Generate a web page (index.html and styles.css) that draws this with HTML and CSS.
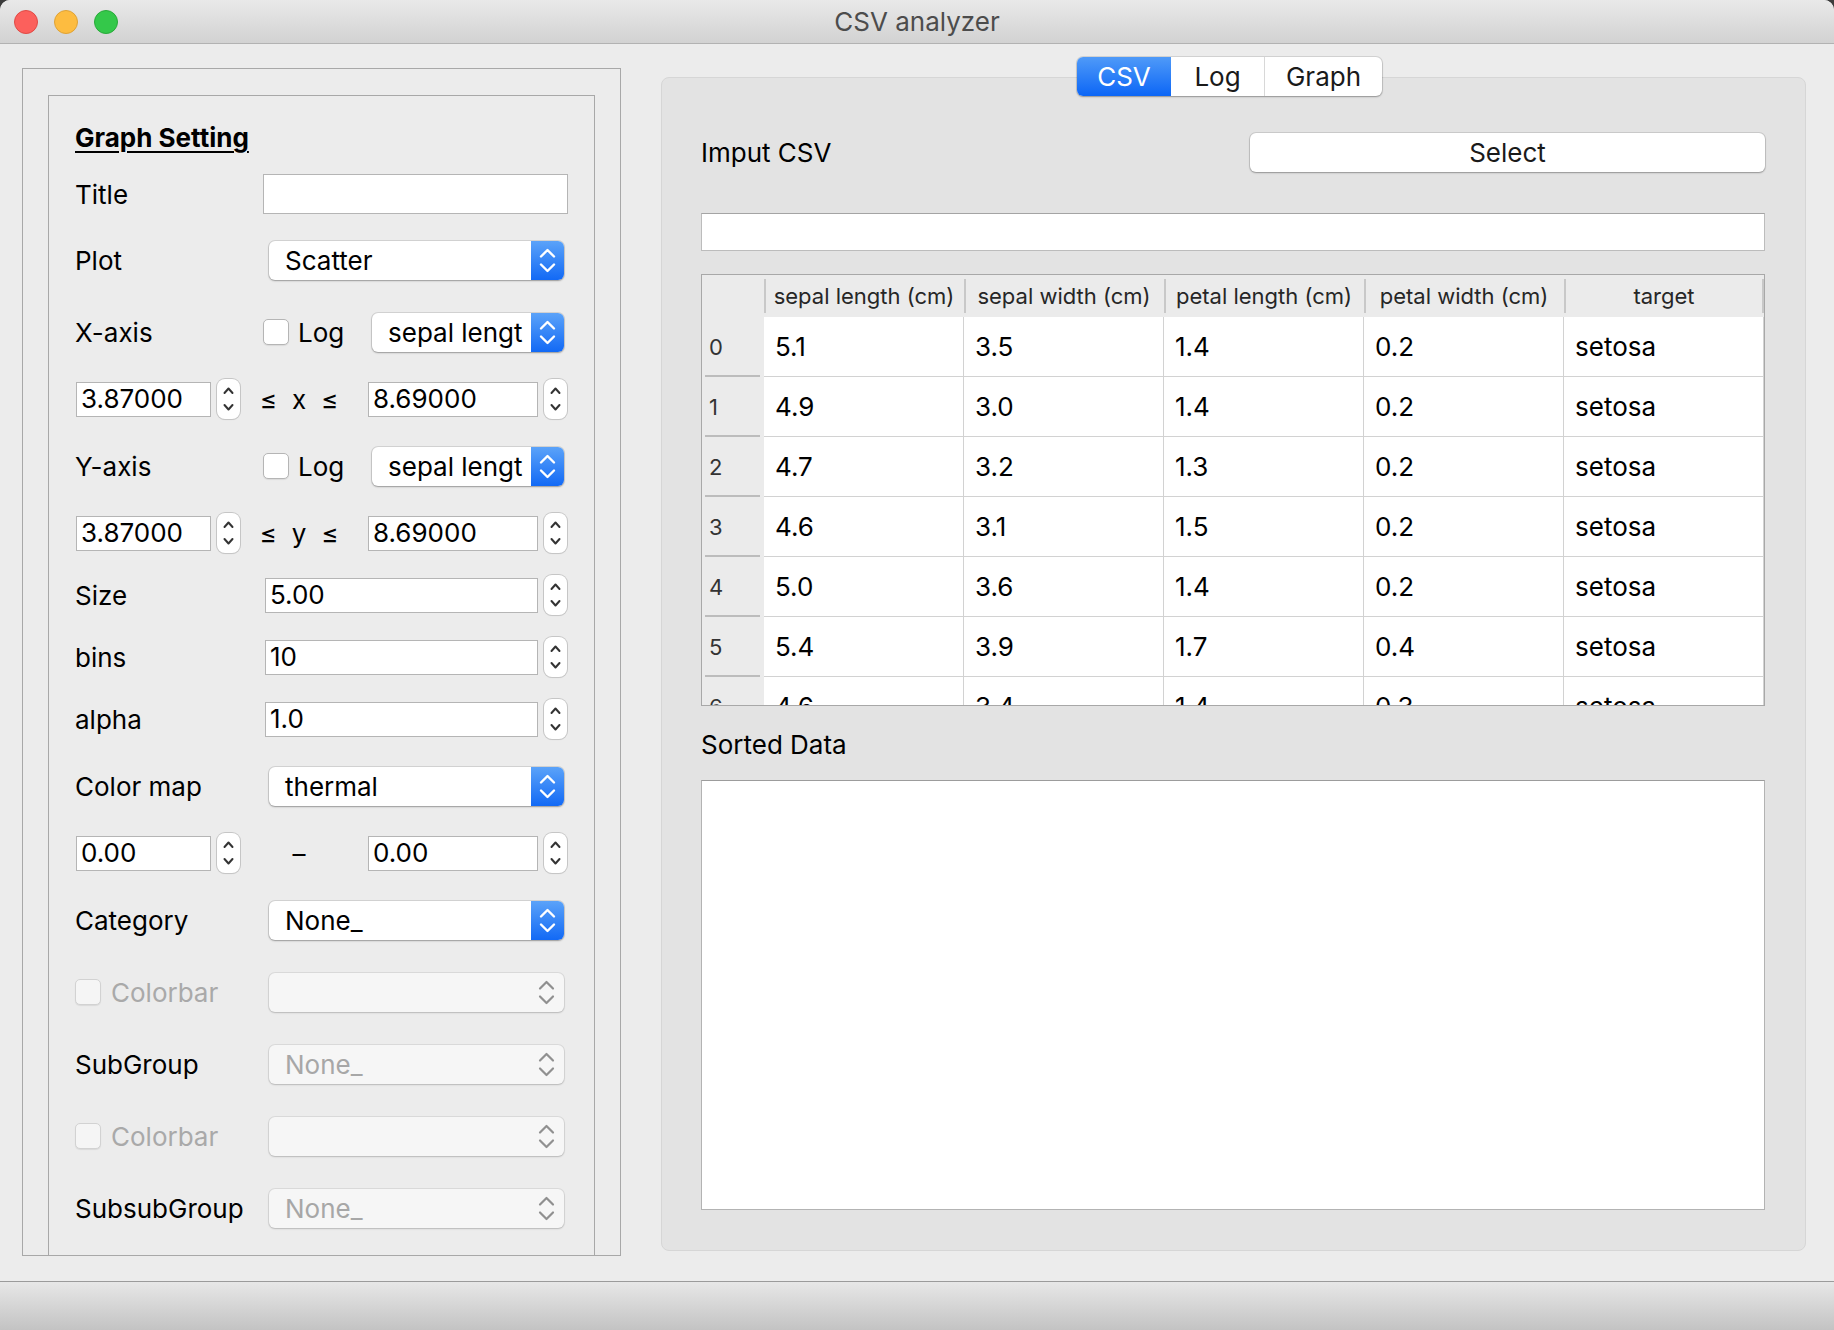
FILE: index.html
```html
<!DOCTYPE html>
<html lang="en">
<head>
<meta charset="utf-8">
<title>CSV analyzer</title>
<link rel="stylesheet" href="styles.css">
</head>
<body>
<div class="window">
  <div class="titlebar">
    <div class="lights">
      <span class="light red"></span><span class="light yellow"></span><span class="light green"></span>
    </div>
    <div class="wtitle">CSV analyzer</div>
    <div></div>
  </div>

  <div class="content">
    <div class="group">
      <div class="settings">
        <div class="heading">Graph Setting</div>
        <div class="form">
          <div class="row r40"><span class="label">Title</span><span class="lineedit"></span></div>

          <div class="row r52"><span class="label">Plot</span>
            <div class="combo full"><span class="ctext">Scatter</span><span class="cbtn"><svg viewBox="0 0 33 39" width="33" height="39"><path d="M10 15.5 L16.5 9 L23 15.5 M10 23.5 L16.5 30 L23 23.5"/></svg></span></div>
          </div>

          <div class="row r52"><span class="label">X-axis</span><span class="check"></span><span class="check-label">Log</span>
            <div class="combo short"><span class="ctext">sepal lengt</span><span class="cbtn"><svg viewBox="0 0 33 39" width="33" height="39"><path d="M10 15.5 L16.5 9 L23 15.5 M10 23.5 L16.5 30 L23 23.5"/></svg></span></div>
          </div>

          <div class="row r42">
            <span class="spin lo">3.87000</span><span class="arrows"><svg viewBox="0 0 23 40" width="23" height="40"><path d="M7.5 14 L11.5 9.5 L15.5 14 M7.5 26 L11.5 30.5 L15.5 26"/></svg></span>
            <span class="between"><span>≤</span><span>x</span><span>≤</span></span>
            <span class="spin hi">8.69000</span><span class="arrows"><svg viewBox="0 0 23 40" width="23" height="40"><path d="M7.5 14 L11.5 9.5 L15.5 14 M7.5 26 L11.5 30.5 L15.5 26"/></svg></span>
          </div>

          <div class="row r52"><span class="label">Y-axis</span><span class="check"></span><span class="check-label">Log</span>
            <div class="combo short"><span class="ctext">sepal lengt</span><span class="cbtn"><svg viewBox="0 0 33 39" width="33" height="39"><path d="M10 15.5 L16.5 9 L23 15.5 M10 23.5 L16.5 30 L23 23.5"/></svg></span></div>
          </div>

          <div class="row r42">
            <span class="spin lo">3.87000</span><span class="arrows"><svg viewBox="0 0 23 40" width="23" height="40"><path d="M7.5 14 L11.5 9.5 L15.5 14 M7.5 26 L11.5 30.5 L15.5 26"/></svg></span>
            <span class="between"><span>≤</span><span>y</span><span>≤</span></span>
            <span class="spin hi">8.69000</span><span class="arrows"><svg viewBox="0 0 23 40" width="23" height="40"><path d="M7.5 14 L11.5 9.5 L15.5 14 M7.5 26 L11.5 30.5 L15.5 26"/></svg></span>
          </div>

          <div class="row r42"><span class="label">Size</span><span class="spin long">5.00</span><span class="arrows"><svg viewBox="0 0 23 40" width="23" height="40"><path d="M7.5 14 L11.5 9.5 L15.5 14 M7.5 26 L11.5 30.5 L15.5 26"/></svg></span></div>
          <div class="row r42"><span class="label">bins</span><span class="spin long">10</span><span class="arrows"><svg viewBox="0 0 23 40" width="23" height="40"><path d="M7.5 14 L11.5 9.5 L15.5 14 M7.5 26 L11.5 30.5 L15.5 26"/></svg></span></div>
          <div class="row r42"><span class="label">alpha</span><span class="spin long">1.0</span><span class="arrows"><svg viewBox="0 0 23 40" width="23" height="40"><path d="M7.5 14 L11.5 9.5 L15.5 14 M7.5 26 L11.5 30.5 L15.5 26"/></svg></span></div>

          <div class="row r52"><span class="label">Color map</span>
            <div class="combo full"><span class="ctext">thermal</span><span class="cbtn"><svg viewBox="0 0 33 39" width="33" height="39"><path d="M10 15.5 L16.5 9 L23 15.5 M10 23.5 L16.5 30 L23 23.5"/></svg></span></div>
          </div>

          <div class="row r42">
            <span class="spin lo">0.00</span><span class="arrows"><svg viewBox="0 0 23 40" width="23" height="40"><path d="M7.5 14 L11.5 9.5 L15.5 14 M7.5 26 L11.5 30.5 L15.5 26"/></svg></span>
            <span class="between"><span>–</span></span>
            <span class="spin hi">0.00</span><span class="arrows"><svg viewBox="0 0 23 40" width="23" height="40"><path d="M7.5 14 L11.5 9.5 L15.5 14 M7.5 26 L11.5 30.5 L15.5 26"/></svg></span>
          </div>

          <div class="row r52"><span class="label">Category</span>
            <div class="combo full"><span class="ctext">None_</span><span class="cbtn"><svg viewBox="0 0 33 39" width="33" height="39"><path d="M10 15.5 L16.5 9 L23 15.5 M10 23.5 L16.5 30 L23 23.5"/></svg></span></div>
          </div>

          <div class="row r52"><span class="check off"></span><span class="check-label dim">Colorbar</span>
            <div class="combo full off"><span class="ctext"></span><span class="cbtn-off"><svg viewBox="0 0 33 39" width="33" height="39"><path d="M9 15.5 L15.5 9 L22 15.5 M9 23.5 L15.5 30 L22 23.5"/></svg></span></div>
          </div>

          <div class="row r52"><span class="label">SubGroup</span>
            <div class="combo full off"><span class="ctext">None_</span><span class="cbtn-off"><svg viewBox="0 0 33 39" width="33" height="39"><path d="M9 15.5 L15.5 9 L22 15.5 M9 23.5 L15.5 30 L22 23.5"/></svg></span></div>
          </div>

          <div class="row r52"><span class="check off"></span><span class="check-label dim">Colorbar</span>
            <div class="combo full off"><span class="ctext"></span><span class="cbtn-off"><svg viewBox="0 0 33 39" width="33" height="39"><path d="M9 15.5 L15.5 9 L22 15.5 M9 23.5 L15.5 30 L22 23.5"/></svg></span></div>
          </div>

          <div class="row r52"><span class="label">SubsubGroup</span>
            <div class="combo full off"><span class="ctext">None_</span><span class="cbtn-off"><svg viewBox="0 0 33 39" width="33" height="39"><path d="M9 15.5 L15.5 9 L22 15.5 M9 23.5 L15.5 30 L22 23.5"/></svg></span></div>
          </div>
        </div>
      </div>
    </div>

    <div class="right">
      <div class="tabs">
        <span class="tab active csv">CSV</span><span class="tab log">Log</span><span class="tab graph">Graph</span>
      </div>
      <div class="pane">
        <div class="import-row">
          <span class="plabel">Imput CSV</span>
          <span class="button">Select</span>
        </div>
        <div class="path"></div>
        <div class="table">
          <div class="thead">
            <span class="corner"></span>
            <span class="th">sepal length (cm)</span>
            <span class="th">sepal width (cm)</span>
            <span class="th">petal length (cm)</span>
            <span class="th">petal width (cm)</span>
            <span class="th last">target</span>
          </div>
          <div class="tr"><span class="rh">0</span><span class="td">5.1</span><span class="td">3.5</span><span class="td">1.4</span><span class="td">0.2</span><span class="td">setosa</span></div>
          <div class="tr"><span class="rh">1</span><span class="td">4.9</span><span class="td">3.0</span><span class="td">1.4</span><span class="td">0.2</span><span class="td">setosa</span></div>
          <div class="tr"><span class="rh">2</span><span class="td">4.7</span><span class="td">3.2</span><span class="td">1.3</span><span class="td">0.2</span><span class="td">setosa</span></div>
          <div class="tr"><span class="rh">3</span><span class="td">4.6</span><span class="td">3.1</span><span class="td">1.5</span><span class="td">0.2</span><span class="td">setosa</span></div>
          <div class="tr"><span class="rh">4</span><span class="td">5.0</span><span class="td">3.6</span><span class="td">1.4</span><span class="td">0.2</span><span class="td">setosa</span></div>
          <div class="tr"><span class="rh">5</span><span class="td">5.4</span><span class="td">3.9</span><span class="td">1.7</span><span class="td">0.4</span><span class="td">setosa</span></div>
          <div class="tr"><span class="rh">6</span><span class="td">4.6</span><span class="td">3.4</span><span class="td">1.4</span><span class="td">0.3</span><span class="td">setosa</span></div>
        </div>
        <div class="plabel sorted">Sorted Data</div>
        <div class="textarea"></div>
      </div>
    </div>
  </div>

  <div class="statusbar"></div>
</div>
</body>
</html>
```

FILE: styles.css
```css
* { box-sizing: border-box; }
html, body { margin: 0; padding: 0; }
body {
  width: 1834px;
  height: 1330px;
  overflow: hidden;
  background: #3c3c3c;
  font-family: Inter, "Noto Sans", sans-serif;
  font-size: 26px;
  color: #000;
}
.window {
  width: 1834px;
  height: 1330px;
  background: #ececec;
  border-radius: 10px 10px 0 0;
  overflow: hidden;
  display: flex;
  flex-direction: column;
}

/* title bar */
.titlebar {
  flex: none;
  height: 44px;
  background: linear-gradient(#e9e9e9, #d2d2d2);
  border-bottom: 1px solid #b2b2b2;
  display: grid;
  grid-template-columns: 1fr auto 1fr;
  align-items: center;
}
.lights { display: flex; gap: 16px; padding-left: 14px; }
.light { width: 24px; height: 24px; border-radius: 50%; }
.red { background: #fc605c; border: 1px solid #df4a45; }
.yellow { background: #fdbc40; border: 1px solid #dea236; }
.green { background: #34c84a; border: 1px solid #29a93a; }
.wtitle { color: #4c4c4c; line-height: 30px; }

/* content */
.content {
  flex: 1;
  display: flex;
  align-items: flex-start;
  padding: 13px 28px 0 22px;
}

.group {
  flex: none;
  width: 599px;
  height: 1188px;
  margin-top: 11px;
  border: 1px solid #a8a8a8;
  padding: 26px 25px 0 25px;
}
.settings {
  height: 100%;
  border: 1px solid #a8a8a8;
  border-bottom: none;
  overflow: hidden;
  padding: 26px 25px 0 26px;
}
.heading {
  font-weight: 700;
  text-decoration: underline;
  text-underline-offset: 4px;
  text-decoration-thickness: 2px;
  line-height: 32px;
  height: 32px;
  margin-bottom: 20px;
}
.form { display: flex; flex-direction: column; gap: 20px; }
.row { display: flex; align-items: center; }
.r40 { height: 40px; }
.r42 { height: 42px; }
.r52 { height: 52px; }
.label { flex: none; width: 188px; }

.lineedit {
  width: 305px;
  height: 40px;
  background: #fff;
  border: 1px solid #b5b5b5;
}

.combo {
  margin-left: auto;
  margin-right: 5px;
  height: 39px;
  border-radius: 6px;
  background: #fff;
  box-shadow: 0 0 0 1px rgba(0,0,0,0.10), 0 1px 2px rgba(0,0,0,0.28);
  display: flex;
  align-items: center;
  overflow: hidden;
}
.combo.full { width: 295px; }
.combo.short { width: 192px; }
.ctext { flex: 1; padding-left: 16px; white-space: nowrap; overflow: hidden; }
.cbtn {
  flex: none;
  width: 33px;
  height: 39px;
  background: linear-gradient(#5ba3f9, #1269f5);
}
.cbtn svg path { fill: none; stroke: #fff; stroke-width: 2.4; stroke-linecap: round; stroke-linejoin: round; }
.combo.off { background: #f6f6f6; box-shadow: 0 0 0 1px rgba(0,0,0,0.07), 0 1px 2px rgba(0,0,0,0.16); }
.combo.off .ctext { color: #a7a7a7; }
.cbtn-off { flex: none; width: 33px; height: 39px; }
.cbtn-off svg path { fill: none; stroke: #909090; stroke-width: 2.2; stroke-linecap: round; stroke-linejoin: round; }

.check {
  flex: none;
  width: 26px;
  height: 26px;
  border-radius: 5px;
  background: #fff;
  border: 1px solid #b5b5b5;
  box-shadow: 0 1px 1px rgba(0,0,0,0.08);
}
.check.off { background: #f5f5f5; border-color: #d2d2d2; }
.check-label { margin-left: 9px; }
.check-label.dim { margin-left: 10px; color: #a9a9a9; }

.spin {
  height: 35px;
  background: #fff;
  border: 1px solid #b5b5b5;
  padding-left: 4px;
  display: flex;
  align-items: center;
  line-height: 1;
}
.spin.lo { margin-left: 1px; width: 135px; }
.spin.hi { width: 170px; }
.spin.long { margin-left: 2px; width: 273px; }
.arrows {
  flex: none;
  margin-left: 6px;
  width: 23px;
  height: 40px;
  border-radius: 8px;
  background: #fff;
  box-shadow: 0 0 0 1px #c6c6c6, 0 1px 1px rgba(0,0,0,0.12);
}
.arrows svg { display: block; }
.arrows svg path { fill: none; stroke: #333; stroke-width: 2; stroke-linecap: round; stroke-linejoin: round; }
.between {
  flex: none;
  width: 128px;
  display: flex;
  justify-content: center;
  gap: 15px;
  padding-right: 10px;
}

/* right side */
.right {
  flex: none;
  width: 1145px;
  margin-left: 40px;
  display: flex;
  flex-direction: column;
}
.tabs {
  position: relative;
  z-index: 1;
  align-self: center;
  margin-right: 8px;
  margin-bottom: -19px;
  display: flex;
  height: 39px;
  border-radius: 6px;
  background: #fff;
  box-shadow: 0 0 0 1px rgba(0,0,0,0.10), 0 1px 2px rgba(0,0,0,0.28);
  overflow: hidden;
}
.tab {
  display: flex;
  align-items: center;
  justify-content: center;
  height: 39px;
  color: #1a1a1a;
}
.tab.csv { width: 94px; }
.tab.log { width: 93px; }
.tab.graph { width: 118px; border-left: 1px solid #d8d8d8; }
.tab.active { background: linear-gradient(#4f9af8, #0c66f6); color: #fff; }

.pane {
  height: 1174px;
  background: #e3e3e3;
  border: 1px solid #d6d6d6;
  border-radius: 8px;
  padding: 55px 40px 0 39px;
}
.import-row {
  height: 39px;
  display: flex;
  align-items: center;
  justify-content: space-between;
}
.plabel { line-height: 32px; }
.button {
  width: 515px;
  height: 39px;
  border-radius: 6px;
  background: #fff;
  box-shadow: 0 0 0 1px rgba(0,0,0,0.10), 0 1px 2px rgba(0,0,0,0.28);
  display: flex;
  align-items: center;
  justify-content: center;
  color: #1a1a1a;
}
.path {
  margin-top: 41px;
  height: 38px;
  background: #fff;
  border: 1px solid #bcbcbc;
  border-top-color: #a4a4a4;
}

.table {
  margin-top: 23px;
  height: 432px;
  background: #fff;
  border: 1px solid #a8a8a8;
  overflow: hidden;
}
.thead, .tr {
  display: grid;
  grid-template-columns: 62px repeat(5, 200px);
}
.thead { height: 42px; background: #ebebeb; font-size: 22px; color: #262626; }
.corner { background: #ebebeb; }
.th {
  position: relative;
  display: flex;
  align-items: center;
  justify-content: center;
  white-space: nowrap;
}
.th::before {
  content: "";
  position: absolute;
  left: 0;
  top: 4px;
  width: 2px;
  height: 34px;
  background: #c8c8c8;
}
.th.last::after {
  content: "";
  position: absolute;
  right: 0;
  top: 4px;
  width: 2px;
  height: 34px;
  background: #c8c8c8;
}
.tr { height: 60px; }
.rh {
  position: relative;
  background: #ebebeb;
  font-size: 22px;
  color: #333;
  padding-left: 7px;
  display: flex;
  align-items: center;
}
.rh::after {
  content: "";
  position: absolute;
  left: 3px;
  right: 4px;
  bottom: 0;
  height: 2px;
  background: #bcbcbc;
}
.td {
  display: flex;
  align-items: center;
  padding-left: 11px;
  border-right: 1px solid #d2d2d2;
  border-bottom: 1px solid #d2d2d2;
}
.td:first-of-type { border-left: 1px solid #d2d2d2; }

.sorted { margin-top: 23px; }
.textarea {
  margin-top: 19px;
  height: 430px;
  background: #fff;
  border: 1px solid #b3b3b3;
  border-top-color: #9c9c9c;
}

.statusbar {
  flex: none;
  height: 49px;
  border-top: 1px solid #9b9b9b;
  background: linear-gradient(#e7e7e7, #c3c3c3);
}
```
